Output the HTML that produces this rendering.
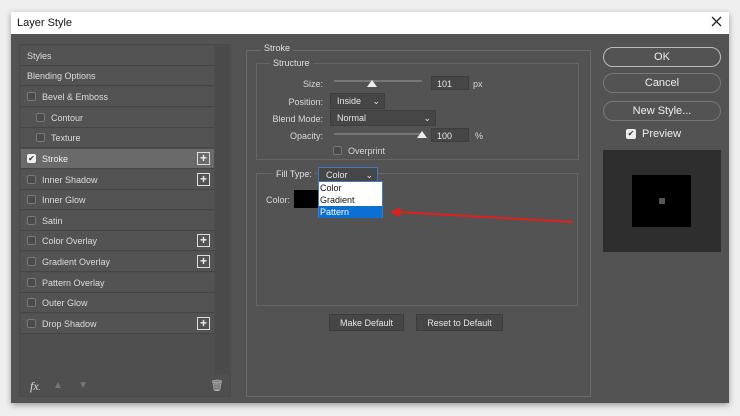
<!DOCTYPE html>
<html><head><meta charset="utf-8"><style>
*{box-sizing:border-box;margin:0;padding:0}
body{width:740px;height:416px;background:#efefef;font-family:"Liberation Sans",sans-serif;font-size:9px;color:#d8d8d8;position:relative;overflow:hidden}
.a{position:absolute}
.dlg{left:11px;top:12px;width:718px;height:391px;background:#535353;box-shadow:0 2px 6px rgba(0,0,0,.35)}
.title{left:11px;top:12px;width:718px;height:22px;background:#fff;color:#111;font-size:11px;padding:5px 0 0 6px}
.item{left:21px;width:193px;height:20px;background:#535353;border-bottom:1px solid #454545;padding:5px 0 0 6px;font-size:9px;color:#dcdcdc}
.cb{display:inline-block;width:9px;height:9px;border:1px solid #777;background:#4a4a4a;border-radius:2px;vertical-align:-1px;margin-right:6px}
.ck{display:inline-block;width:9px;height:9px;background:#eee;border-radius:2px;color:#333;font-size:8px;line-height:9px;text-align:center;vertical-align:-1px;margin-right:6px;overflow:hidden}
.plus{position:absolute;right:4px;top:3px;width:13px;height:13px;border:1px solid #ddd;color:#eee;font-size:12px;line-height:10px;text-align:center;font-weight:bold}
.fs{border:1px solid #666}
.lg{background:#535353;padding:0 3px;color:#e0e0e0;font-size:9px}
.inp{background:#464646;border:1px solid #3e3e3e;color:#e6e6e6;padding:2px 5px;font-size:9px}
.btn{border:1px solid #9a9a9a;border-radius:10px;color:#eee;text-align:center;font-size:11px;padding-top:3px}
.sbtn{background:#464646;border:1px solid #3c3c3c;color:#e6e6e6;text-align:center;font-size:9px;padding-top:3px}
.lbl{text-align:right;color:#d8d8d8;font-size:9px}
</style></head><body>
<div class="a dlg"></div>
<div class="a title">Layer Style</div>
<svg class="a" style="left:711px;top:16px" width="11" height="11"><path d="M1 1L10 10M10 1L1 10" stroke="#222" stroke-width="1.3"/></svg>

<div class="a fs" style="left:19px;top:44px;width:212px;height:353px;border-color:#4a4a4a;background:#4f4f4f"></div>
<div class="a" style="left:215px;top:46px;width:14px;height:328px;background:#4a4a4a"></div>

<div class="a item" style="top:46px">Styles</div>
<div class="a item" style="top:66px">Blending Options</div>
<div class="a item" style="top:87px"><span class="cb"></span>Bevel &amp; Emboss</div>
<div class="a item" style="top:108px;padding-left:15px"><span class="cb"></span>Contour</div>
<div class="a item" style="top:128px;padding-left:15px"><span class="cb"></span>Texture</div>
<div class="a item" style="top:149px;background:#6a6a6a;color:#f0f0f0"><span class="ck">✔</span>Stroke<span class="plus">+</span></div>
<div class="a item" style="top:170px"><span class="cb"></span>Inner Shadow<span class="plus">+</span></div>
<div class="a item" style="top:190px"><span class="cb"></span>Inner Glow</div>
<div class="a item" style="top:211px"><span class="cb"></span>Satin</div>
<div class="a item" style="top:231px"><span class="cb"></span>Color Overlay<span class="plus">+</span></div>
<div class="a item" style="top:252px"><span class="cb"></span>Gradient Overlay<span class="plus">+</span></div>
<div class="a item" style="top:273px"><span class="cb"></span>Pattern Overlay</div>
<div class="a item" style="top:293px"><span class="cb"></span>Outer Glow</div>
<div class="a item" style="top:314px"><span class="cb"></span>Drop Shadow<span class="plus">+</span></div>

<div class="a" style="left:30px;top:379px;font-style:italic;font-size:12px;color:#ddd;font-family:'Liberation Serif',serif">fx<span style="font-size:7px">.</span></div>
<div class="a" style="left:53px;top:380px;color:#777;font-size:10px">▲</div>
<div class="a" style="left:78px;top:380px;color:#777;font-size:10px">▼</div>
<div class="a" style="left:210px;top:379px;color:#bbb;font-size:11px">🗑</div>

<div class="a fs" style="left:246px;top:50px;width:345px;height:347px;border-color:#6a6a6a"></div>
<div class="a lg" style="left:261px;top:43px">Stroke</div>
<div class="a fs" style="left:256px;top:63px;width:323px;height:97px"></div>
<div class="a lg" style="left:270px;top:58px">Structure</div>

<div class="a lbl" style="left:260px;top:79px;width:63px">Size:</div>
<div class="a" style="left:334px;top:80px;width:88px;height:2px;background:#777"></div>
<div class="a" style="left:367px;top:80px;width:0;height:0;border-left:5px solid transparent;border-right:5px solid transparent;border-bottom:7px solid #eee"></div>
<div class="a inp" style="left:431px;top:76px;width:38px;height:14px">101</div>
<div class="a" style="left:473px;top:79px">px</div>

<div class="a lbl" style="left:260px;top:97px;width:63px">Position:</div>
<div class="a inp" style="left:330px;top:93px;width:55px;height:16px;padding-left:6px">Inside<span style="position:absolute;right:4px">⌄</span></div>
<div class="a lbl" style="left:260px;top:114px;width:63px">Blend Mode:</div>
<div class="a inp" style="left:330px;top:110px;width:106px;height:16px;padding-left:6px">Normal<span style="position:absolute;right:4px">⌄</span></div>
<div class="a lbl" style="left:260px;top:131px;width:63px">Opacity:</div>
<div class="a" style="left:334px;top:133px;width:88px;height:2px;background:#777"></div>
<div class="a" style="left:417px;top:131px;width:0;height:0;border-left:5px solid transparent;border-right:5px solid transparent;border-bottom:7px solid #eee"></div>
<div class="a inp" style="left:431px;top:128px;width:38px;height:14px">100</div>
<div class="a" style="left:475px;top:131px">%</div>
<div class="a" style="left:333px;top:146px"><span class="cb"></span>Overprint</div>

<div class="a fs" style="left:256px;top:173px;width:322px;height:133px"></div>
<div class="a lg" style="left:273px;top:169px">Fill Type:</div>
<div class="a inp" style="left:318px;top:167px;width:60px;height:15px;border-color:#3f79c6;padding-left:7px">Color<span style="position:absolute;right:4px">⌄</span></div>
<div class="a" style="left:266px;top:195px">Color:</div>
<div class="a" style="left:294px;top:190px;width:26px;height:18px;background:#000"></div>
<div class="a" style="left:318px;top:181px;width:65px;height:37px;background:#fff;border:1px solid #3f79c6;color:#111;font-size:9px;line-height:12px;padding-left:1px">
<div>Color</div><div>Gradient</div><div style="background:#0b6fd3;color:#fff;margin-left:-1px;padding-left:1px">Pattern</div></div>
<svg class="a" style="left:385px;top:204px" width="195" height="24"><line x1="188" y1="18" x2="14" y2="8" stroke="#e0201e" stroke-width="2"/><polygon points="5,8 16,3 15,13" fill="#e0201e"/></svg>

<div class="a sbtn" style="left:329px;top:314px;width:75px;height:17px">Make Default</div>
<div class="a sbtn" style="left:416px;top:314px;width:87px;height:17px">Reset to Default</div>

<div class="a btn" style="left:603px;top:47px;width:118px;height:20px;border-color:#bbb">OK</div>
<div class="a btn" style="left:603px;top:73px;width:118px;height:20px;border-color:#777">Cancel</div>
<div class="a btn" style="left:603px;top:101px;width:118px;height:20px;border-color:#777">New Style...</div>
<div class="a" style="left:626px;top:128px;font-size:11px;color:#eee;display:flex;align-items:center"><span class="ck" style="width:10px;height:10px;line-height:10px;vertical-align:0">✔</span>Preview</div>
<div class="a" style="left:603px;top:150px;width:118px;height:102px;background:#2e2e2e"></div>
<div class="a" style="left:632px;top:175px;width:59px;height:52px;background:#000"></div>
<div class="a" style="left:659px;top:198px;width:6px;height:6px;background:#555"></div>
</body></html>
